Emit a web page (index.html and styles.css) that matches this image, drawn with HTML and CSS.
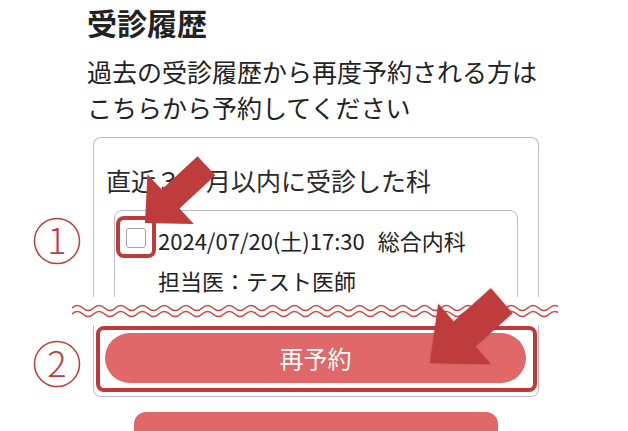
FILE: index.html
```html
<!DOCTYPE html>
<html lang="ja">
<head>
<meta charset="utf-8">
<title>受診履歴</title>
<link rel="stylesheet" href="styles.css">
</head>
<body>
<div class="page">
  <h1 class="title">受診履歴</h1>
  <p class="lead">過去の受診履歴から再度予約される方は<br>こちらから予約してください</p>
  <section class="card">
    <div class="card-top">
      <h2 class="card-heading">直近３ヶ月以内に受診した科</h2>
      <div class="visit">
        <span class="checkbox"></span>
        <div class="visit-body">
          <p class="visit-line">2024/07/20(土)17:30<span class="dept">総合内科</span></p>
          <p class="visit-line">担当医：テスト医師</p>
        </div>
      </div>
    </div>
    <div class="cut">
      <svg class="waves" width="486" height="14" viewBox="0 0 486 14">
        <path d="M0 4 q5.425 -5 10.85 0 t10.85 0 t10.85 0 t10.85 0 t10.85 0 t10.85 0 t10.85 0 t10.85 0 t10.85 0 t10.85 0 t10.85 0 t10.85 0 t10.85 0 t10.85 0 t10.85 0 t10.85 0 t10.85 0 t10.85 0 t10.85 0 t10.85 0 t10.85 0 t10.85 0 t10.85 0 t10.85 0 t10.85 0 t10.85 0 t10.85 0 t10.85 0 t10.85 0 t10.85 0 t10.85 0 t10.85 0 t10.85 0 t10.85 0 t10.85 0 t10.85 0 t10.85 0 t10.85 0 t10.85 0 t10.85 0 t10.85 0 t10.85 0 t10.85 0 t10.85 0 t10.85 0"/>
        <path d="M0 10 q5.425 -5 10.85 0 t10.85 0 t10.85 0 t10.85 0 t10.85 0 t10.85 0 t10.85 0 t10.85 0 t10.85 0 t10.85 0 t10.85 0 t10.85 0 t10.85 0 t10.85 0 t10.85 0 t10.85 0 t10.85 0 t10.85 0 t10.85 0 t10.85 0 t10.85 0 t10.85 0 t10.85 0 t10.85 0 t10.85 0 t10.85 0 t10.85 0 t10.85 0 t10.85 0 t10.85 0 t10.85 0 t10.85 0 t10.85 0 t10.85 0 t10.85 0 t10.85 0 t10.85 0 t10.85 0 t10.85 0 t10.85 0 t10.85 0 t10.85 0 t10.85 0 t10.85 0 t10.85 0"/>
      </svg>
    </div>
    <div class="card-bottom">
      <button class="btn-primary" type="button">再予約</button>
    </div>
  </section>
  <div class="next">
    <button class="btn-secondary" type="button"></button>
  </div>
</div>

<svg class="annotations" width="628" height="431" viewBox="0 0 628 431">
  <circle class="num-ring" cx="57" cy="241" r="22.5"/>
  <text class="num-text" x="57" y="254">1</text>
  <circle class="num-ring" cx="57" cy="364" r="22.5"/>
  <text class="num-text" x="57" y="377">2</text>
  <rect class="mark-box" x="118" y="218" width="36" height="38" rx="6"/>
  <rect class="mark-box" x="98" y="328" width="437" height="62" rx="6"/>
  <polygon class="arrow" points="145,223 147.4,174.2 161.7,189.6 197.5,156.2 215.3,175.2 179.5,208.6 193.8,224"/>
  <polygon class="arrow arrow-soft" points="430,363 438.3,303.8 453.7,321.5 490.9,288.2 512.5,313.2 475.3,346.5 490.7,364.2"/>
</svg>
</body>
</html>
```

FILE: styles.css
```css
html, body {
  margin: 0;
  height: 431px;
  overflow: hidden;
  background: #ffffff;
}

body {
  position: relative;
  font-family: "Noto Sans CJK JP", "Noto Sans", sans-serif;
  color: #222222;
}

.page {
  margin-left: 87px;
  width: 452px;
}

.title {
  margin: 0;
  font-size: 30px;
  font-weight: 700;
  line-height: 44px;
}

.lead {
  margin: 9px 0 0;
  font-size: 25px;
  line-height: 36px;
}

.card {
  margin: 12px 0 0 6px;
  width: 446px;
}

.card-top {
  box-sizing: border-box;
  height: 160px;
  padding: 0 12px;
  border: 1px solid #b9bdc9;
  border-bottom: none;
  border-radius: 8px 8px 0 0;
  overflow: hidden;
}

.card-heading {
  margin: 0;
  padding-top: 24px;
  font-size: 25px;
  font-weight: 400;
  line-height: 36px;
  color: #2a2a2a;
}

.visit {
  margin: 12px 8px 0;
  padding: 9px 10px 60px 11px;
  border: 1px solid #b9bdc9;
  border-radius: 8px;
  display: grid;
  grid-template-columns: 20px 1fr;
  column-gap: 12px;
}

.checkbox {
  box-sizing: border-box;
  width: 20px;
  height: 20px;
  margin-top: 8px;
  border: 1.5px solid #9ea3b0;
  border-radius: 3px;
  background: #ffffff;
}

.visit-line {
  margin: 0;
  font-size: 22px;
  line-height: 40px;
}

.dept {
  margin-left: 13px;
}

.cut {
  height: 28px;
  width: 486px;
  margin-left: -21px;
  display: flex;
  align-items: center;
}

.waves {
  display: block;
}

.waves path {
  fill: none;
  stroke: #c94848;
  stroke-width: 1.6;
}

.card-bottom {
  padding: 8px 12px 13px 11px;
  border: 1px solid #b9bdc9;
  border-top: none;
  border-radius: 0 0 8px 8px;
}

.btn-primary {
  display: block;
  width: 100%;
  height: 50px;
  padding: 0;
  border: none;
  border-radius: 25px;
  background: #e06868;
  color: #ffffff;
  font-family: "Noto Sans CJK JP", sans-serif;
  font-size: 24px;
  line-height: 50px;
}

.next {
  margin: 15px 0 0 6px;
  width: 446px;
  display: flex;
  justify-content: center;
}

.btn-secondary {
  display: block;
  width: 364px;
  height: 60px;
  border: none;
  border-radius: 12px 12px 0 0;
  background: #e06868;
}

.annotations {
  position: absolute;
  top: 0;
  left: 0;
  pointer-events: none;
}

.num-ring {
  fill: none;
  stroke: #c23b3b;
  stroke-width: 1.5;
}

.num-text {
  fill: #c23b3b;
  font-family: "Noto Sans CJK JP", sans-serif;
  font-size: 36px;
  font-weight: 300;
  text-anchor: middle;
}

.mark-box {
  fill: none;
  stroke: #bf3a3a;
  stroke-width: 4;
}

.arrow {
  fill: #be3c3c;
}

.arrow-soft {
  filter: drop-shadow(0 0 1px rgba(150, 40, 40, 0.5));
}
```
